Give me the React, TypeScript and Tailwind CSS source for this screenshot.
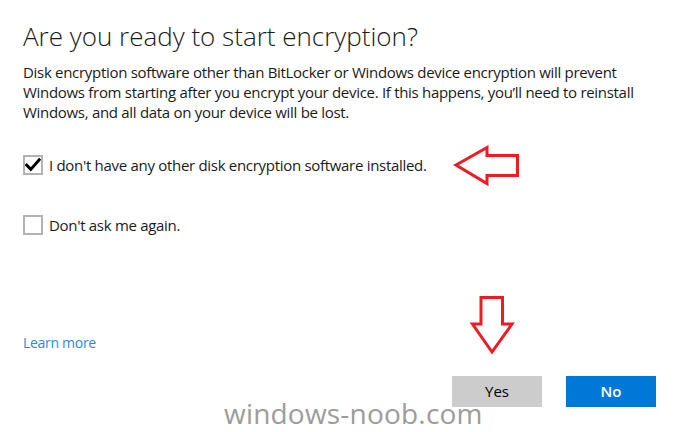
import React from "react";

const Checkbox = ({ checked }: { checked: boolean }) => (
  <div className="w-5 h-5 border-2 border-[#b3b3b3] bg-white flex items-center justify-center shrink-0">
    {checked && (
      <svg width="16" height="16" viewBox="0 0 16 16">
        <path d="M1.8 8.2 L5.8 12.4 L14.2 2.8" fill="none" stroke="#000" strokeWidth="3" strokeLinecap="square" />
      </svg>
    )}
  </div>
);

const CheckRow = ({ checked, label }: { checked: boolean; label: string }) => (
  <div className="flex items-center gap-[6px] h-5">
    <Checkbox checked={checked} />
    <span className="text-[15px] leading-5 text-[#1a1a1a] tracking-[-0.3px]">{label}</span>
  </div>
);

export default function App() {
  return (
    <div
      className="relative w-[680px] h-[432px] bg-white overflow-hidden flex flex-col px-[23px] pt-[20px]"
      style={{ fontFamily: '"Open Sans", "Noto Sans", sans-serif' }}
    >
      <h1 className="text-[26px] leading-[32px] font-light text-[#1a1a1a]">Are you ready to start encryption?</h1>
      <p className="mt-[10px] text-[15px] leading-5 text-[#1a1a1a] tracking-[-0.3px] whitespace-nowrap">
        Disk encryption software other than BitLocker or Windows device encryption will prevent
        <br />
        Windows from starting after you encrypt your device. If this happens, you’ll need to reinstall
        <br />
        Windows, and all data on your device will be lost.
      </p>

      <div className="mt-[33px] flex flex-col gap-10">
        <CheckRow checked label="I don't have any other disk encryption software installed." />
        <CheckRow checked={false} label="Don't ask me again." />
      </div>

      <a className="mt-[98px] text-[14px] leading-5 text-[#2a8ae6] tracking-[-0.3px] w-fit cursor-pointer">
        Learn more
      </a>

      <div className="mt-[23px] flex justify-end gap-6 pr-px">
        <button className="w-[90px] h-[31px] bg-[#cccccc] text-[15px] text-black">Yes</button>
        <button className="w-[90px] h-[31px] bg-[#0078d7] text-[15px] text-white font-semibold">No</button>
      </div>

      {/* red annotation arrows */}
      <svg className="absolute left-[452px] top-[144px]" width="70" height="44" viewBox="452 144 70 44">
        <path
          d="M456 165 L487 147.5 L487 155.5 L517.5 155.5 L517.5 175.5 L487 175.5 L487 183.5 Z"
          fill="none"
          stroke="#ed1c24"
          strokeWidth="3"
          strokeLinejoin="miter"
        />
      </svg>
      <svg className="absolute left-[468px] top-[294px]" width="50" height="62" viewBox="468 294 50 62">
        <path
          d="M481 297.5 L502.5 297.5 L502.5 324 L512 324 L492 352 L472.5 324 L481 324 Z"
          fill="none"
          stroke="#ed1c24"
          strokeWidth="3"
          strokeLinejoin="miter"
        />
      </svg>

      {/* watermark */}
      <div className="absolute left-[224px] top-[396px] text-[28px] leading-[34px] text-[#9c9c9c] tracking-[0.2px] pointer-events-none">
        windows-noob.com
      </div>
    </div>
  );
}
